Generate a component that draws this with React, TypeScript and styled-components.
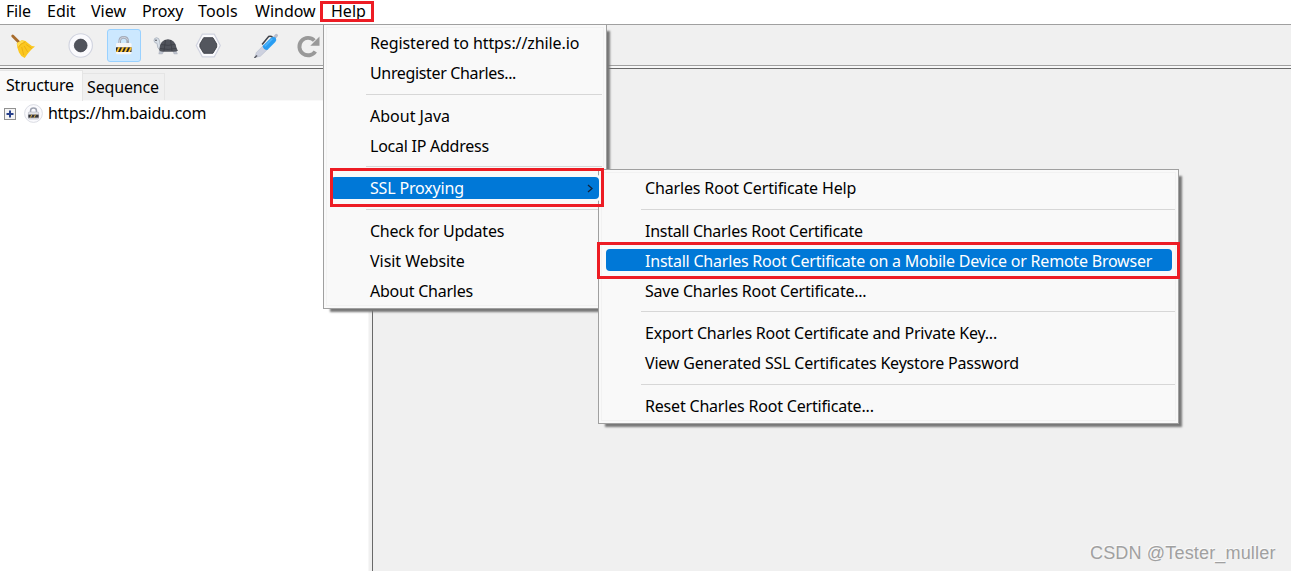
import React from 'react';
import styled, { createGlobalStyle } from 'styled-components';

const Global = createGlobalStyle`
  * { box-sizing: border-box; }
  body { margin: 0; background: #f0f0f0; font-family: "Noto Sans", "Open Sans", sans-serif; font-size: 16px; color: #000; }
  svg { display: block; }
`;

const Window = styled.div`
  position: relative;
  width: 1291px;
  height: 571px;
  overflow: hidden;
  display: flex;
  flex-direction: column;
  background: #f0f0f0;
`;

const MenuBar = styled.nav`
  height: 25px;
  flex: none;
  display: flex;
  background: #fff;
  border-bottom: 1px solid #a0a0a0;
`;

const MenuTitle = styled.div<{ $w: number; $ls?: number }>`
  width: ${p => p.$w}px;
  padding-left: 6px;
  line-height: 23px;
  white-space: nowrap;
  letter-spacing: ${p => p.$ls ?? 0}px;
`;

const ToolBar = styled.div`
  height: 44px;
  flex: none;
  display: flex;
  align-items: flex-start;
  padding: 4px 0 0 5px;
  border-bottom: 1px solid #696969;
  background: linear-gradient(#f0f0f0 40px, #a0a0a0 40px, #a0a0a0 41px, #f8f8f8 41px);
`;

const ToolButton = styled.button<{ $active?: boolean; $gap: number }>`
  width: 34px;
  height: 33px;
  margin: 0 0 0 ${p => p.$gap}px;
  padding: 0 0 0 3px;
  border-radius: 3px;
  border: 1px solid ${p => (p.$active ? '#99d1ff' : 'transparent')};
  background: ${p => (p.$active ? '#cce8ff' : 'transparent')};
`;

const Body = styled.div`
  flex: 1;
  display: flex;
`;

const Sidebar = styled.aside`
  width: 368px;
  display: flex;
  flex-direction: column;
  background: #fff;
`;

const Tabs = styled.div`
  height: 32px;
  display: flex;
  align-items: flex-end;
  background: #f0f0f0;
  border-bottom: 1px solid #f9f9f9;
`;

const Tab = styled.div<{ $active?: boolean; $ls: number }>`
  width: ${p => (p.$active ? 83 : 82)}px;
  height: ${p => (p.$active ? 31 : 27)}px;
  padding-left: ${p => (p.$active ? 6 : 4)}px;
  line-height: ${p => (p.$active ? 28 : 27)}px;
  margin-bottom: ${p => (p.$active ? -1 : 0)}px;
  letter-spacing: ${p => p.$ls}px;
  background: ${p => (p.$active ? '#f9f9f9' : '#f0f0f0')};
  border: 1px solid #e5e5e5;
  border-width: 1px 1px 0 0;
  white-space: nowrap;
`;

const TreeRow = styled.div`
  height: 25px;
  display: flex;
  align-items: center;
  gap: 8px;
  padding-left: 4px;
`;

const HostName = styled.span`
  margin: 0 0 2px -3px;
  line-height: 24px;
  letter-spacing: -0.27px;
`;

const Divider = styled.div`
  width: 5px;
  background: #f0f0f0;
  border-left: 1px solid #f7f7f7;
  border-right: 1px solid #696969;
`;

const Popup = styled.div<{ $x: number; $y: number; $w: number; $h: number }>`
  position: absolute;
  left: ${p => p.$x}px;
  top: ${p => p.$y}px;
  width: ${p => p.$w}px;
  height: ${p => p.$h}px;
  padding-top: 4px;
  background: #f9f9f9;
  border: 1px solid #a0a0a0;
  box-shadow: inset 0 0 0 2px #f9f9f9, inset 0 0 0 3px #f2f2f2, 5px 5px 2px -2px #777;
`;

const Item = styled.div<{ $ls?: number }>`
  height: 30px;
  padding-left: 46px;
  line-height: 29px;
  white-space: nowrap;
  letter-spacing: ${p => p.$ls ?? 0}px;
`;

const Separator = styled.div<{ $early?: boolean; $inset?: number }>`
  height: ${p => (p.$early ? 12 : 13)}px;
  padding-top: ${p => (p.$early ? 4 : 5)}px;
  margin: 0 ${p => p.$inset ?? 3}px 0 42px;
  &::before { content: ''; display: block; height: 1px; background: #d7d7d7; }
`;

const Selected = styled.div<{ $raised?: boolean; $ls: number }>`
  position: relative;
  z-index: ${p => (p.$raised ? 1 : 0)};
  height: 22px;
  margin: ${p => (p.$raised ? '3px 7px 5px' : '2px 6px 6px 7px')};
  padding: ${p => (p.$raised ? 0 : 2)}px 5px 0 39px;
  display: flex;
  align-items: center;
  justify-content: space-between;
  line-height: 22px;
  white-space: nowrap;
  color: #fff;
  background: #0078d7;
  border-radius: 4px;
  letter-spacing: ${p => p.$ls}px;
  box-shadow: ${p => (p.$raised ? '2px 0 0 2px #f9f9f9' : 'none')};
`;

const Mark = styled.div<{ $x: number; $y: number; $w: number; $h: number }>`
  position: absolute;
  z-index: 2;
  left: ${p => p.$x}px;
  top: ${p => p.$y}px;
  width: ${p => p.$w}px;
  height: ${p => p.$h}px;
  border: 3px solid #ed1c24;
`;

const Watermark = styled.div`
  position: absolute;
  left: 1090px;
  top: 542px;
  font: 18px/22px "Liberation Sans", sans-serif;
  letter-spacing: 0.17px;
  color: #a0a0a0;
  text-shadow: -1px -1px 0 #fafafa;
  white-space: nowrap;
`;

const Icon = ({ children }: { children: React.ReactNode }) => (
  <svg width="26" height="25" viewBox="0 0 26 25" fill="none">{children}</svg>
);

const Broom = () => (
  <Icon>
    <g transform="translate(.7 0)">
      <path d="M3 3L11 11" stroke="#a86c2c" strokeWidth="2.8" strokeLinecap="round" />
      <path d="M7 10.2L12 7.3Q15.5 6.8 18.5 10.2Q21.500 13.300 25.300 13.600Q20 17.500 15 25Q11 23.500 9.300 19.500Q7.600 16 7 10.200Z" fill="#fbc71f" />
      <path d="M7 10.200L12 7.300L14.500 9Q10.500 10 8.600 14Z" fill="#ffdc4f" />
      <path d="M8.500 14.500Q10.500 10.500 15.500 9M12 14L14 22M14.500 13L18 19M16.500 11.500L22 15.500" stroke="#e5a512" strokeWidth=".7" />
    </g>
  </Icon>
);

const Record = () => (
  <Icon>
    <circle cx="12.7" cy="12.5" r="11.7" fill="#fafafd" stroke="#d0d3df" strokeWidth="1.1" />
    <circle cx="12.7" cy="12.5" r="6.4" fill="#50535b" stroke="#3b3e47" strokeWidth=".7" />
  </Icon>
);

const Padlock = () => (
  <Icon>
    <path d="M8.700 11V8.300Q8.700 4.400 12.700 4.400Q16.700 4.400 16.700 8.300V11" stroke="#a2a8b6" strokeWidth="2.600" />
    <path d="M8.500 10V8.200Q8.700 4.300 12.700 4.300Q16 4.300 16.800 7.300" stroke="#d4d8e2" strokeWidth=".9" />
    <rect x="5" y="10" width="15.500" height="11.200" rx="1.300" fill="#f6f6f8" />
    <path d="M5 14.300H20.500V19H5Z" fill="#27272c" />
    <path d="M5 19L7.200 14.300H9.200L7 19ZM9 19L11.200 14.300H13.200L11 19ZM13 19L15.200 14.300H17.200L15 19ZM17 19L19.200 14.300H20.500V15.800L19 19Z" fill="#fbc02d" />
  </Icon>
);

const Turtle = () => (
  <Icon>
    <path d="M6.500 17L5.800 21H9.300L11 18ZM19.500 17L21 21H24.400L22.800 17Z" fill="#bfc4cf" stroke="#a2a7b4" strokeWidth=".4" />
    <path d="M1 7.800Q.8 5 3.500 4.700Q6.300 4.800 6.500 8L7.500 13.500L9 17.500Q5.600 17.200 4.800 14.500L4 10.300Q1.300 10.200 1 7.800Z" fill="#d8dfe7" stroke="#9fa7b5" strokeWidth=".7" />
    <circle cx="3" cy="7.200" r=".8" fill="#35373e" />
    <path d="M6.200 16.500Q7 6.500 15 6.200Q22.500 6.500 23.500 15.500L25 17.400Q23.500 19 19 18.700H10Q6.500 18.700 6.200 16.500Z" fill="#50535b" />
    <path d="M7 15.500Q15 17.500 24 15.200M8 11.500Q15 13.300 22.300 11.300M12.500 7L11 18M17.500 7L19 18" stroke="#3a3c43" strokeWidth=".7" />
  </Icon>
);

const Hexagon = () => (
  <Icon>
    <path d="M7.300 1.200H19.300L25.300 12.500L19.300 23.800H7.300L1.300 12.500Z" fill="#fafafd" stroke="#d0d3df" strokeWidth="1.200" />
    <path d="M8.700 4.700H17.900L21.700 11V14L17.900 20.300H8.700L4.900 14V11Z" fill="#53565e" stroke="#3c3f47" strokeWidth=".9" />
  </Icon>
);

const Pen = () => (
  <Icon>
    <g transform="translate(.8 0)">
      <path d="M9.300 11.500L15.800 3.600Q18 2.700 20 4.500" stroke="#40434b" strokeWidth="1.600" />
      <path d="M21.800 4.500L23.500 2.500" stroke="#b9bdca" strokeWidth="3.200" strokeLinecap="round" />
      <path d="M2 24.500L3.500 19.500L10.700 12.300L14.800 16.400L7.600 23.200Z" fill="#cdd1df" stroke="#b1b6c7" strokeWidth=".5" />
      <path d="M1.600 24.900L4.300 22.500" stroke="#565961" strokeWidth="1.400" />
      <path d="M9.800 13L18.300 4.800Q20.500 3.200 22.800 4.400Q24.200 6.600 22.500 9L14.500 17Q10.700 16.800 9.800 13Z" fill="#299df2" />
      <path d="M12 13.200L19.500 5.800" stroke="#50b5fb" strokeWidth="1.500" />
    </g>
  </Icon>
);

const Repeat = () => (
  <Icon>
    <path d="M20.300 18.500A8.700 8.700 0 1 1 19.300 7.500" stroke="#999" strokeWidth="3.900" />
    <path d="M24.500 3.500V12.800H15.300Z" fill="#999" />
  </Icon>
);

const Expander = () => (
  <svg width="12" height="12" viewBox="0 0 12 12" fill="none">
    <rect x=".5" y=".5" width="11" height="11" fill="#f5f5f5" stroke="#919191" />
    <path d="M2.500 6H9.500M6 2.500V9.500" stroke="#27408b" strokeWidth="2" />
  </svg>
);

const HostLock = () => (
  <svg width="19" height="19" viewBox="0 0 26 26" fill="none">
    <circle cx="13" cy="13" r="12.200" fill="#fafafd" stroke="#d8dae2" strokeWidth="1.300" />
    <path d="M9 12V9Q9 5.500 13 5.500Q17 5.500 17 9V12" stroke="#9da2af" strokeWidth="2.100" />
    <rect x="6" y="11" width="14" height="9.500" rx="1" fill="#e2e3e8" stroke="#b4b7c0" strokeWidth=".9" />
    <path d="M6 14.500H20V18.700H6Z" fill="#34343a" />
    <path d="M8 18.700L10 14.500H11.500L9.500 18.700ZM13 18.700L15 14.500H16.500L14.500 18.700Z" fill="#d3ab4b" />
  </svg>
);

const Chevron = () => (
  <svg width="7" height="9" viewBox="0 0 7 9" fill="none">
    <path d="M1 1L5 4.500L1 8" stroke="#10233a" strokeWidth="1.300" />
  </svg>
);

export default function App() {
  return (
    <Window>
      <Global />
      <MenuBar>
        <MenuTitle $w={41} $ls={-0.2}>File</MenuTitle>
        <MenuTitle $w={44}>Edit</MenuTitle>
        <MenuTitle $w={51}>View</MenuTitle>
        <MenuTitle $w={56} $ls={-0.15}>Proxy</MenuTitle>
        <MenuTitle $w={57} $ls={0.2}>Tools</MenuTitle>
        <MenuTitle $w={76}>Window</MenuTitle>
        <MenuTitle $w={60}>Help</MenuTitle>
      </MenuBar>
      <ToolBar>
        <ToolButton $gap={0}><Broom /></ToolButton>
        <ToolButton $gap={25}><Record /></ToolButton>
        <ToolButton $gap={9} $active><Padlock /></ToolButton>
        <ToolButton $gap={8}><Turtle /></ToolButton>
        <ToolButton $gap={8}><Hexagon /></ToolButton>
        <ToolButton $gap={23}><Pen /></ToolButton>
        <ToolButton $gap={9}><Repeat /></ToolButton>
      </ToolBar>
      <Body>
        <Sidebar>
          <Tabs>
            <Tab $active $ls={-0.2}>Structure</Tab>
            <Tab $ls={-0.15}>Sequence</Tab>
          </Tabs>
          <TreeRow>
            <Expander />
            <HostLock />
            <HostName>https://hm.baidu.com</HostName>
          </TreeRow>
        </Sidebar>
        <Divider />
      </Body>
      <Popup $x={323} $y={24} $w={284} $h={285}>
        <Item $ls={-0.1}>Registered to https://zhile.io</Item>
        <Item $ls={-0.35}>Unregister Charles...</Item>
        <Separator $inset={4} />
        <Item>About Java</Item>
        <Item $ls={-0.25}>Local IP Address</Item>
        <Separator $early $inset={4} />
        <Selected $raised $ls={-0.17}>SSL Proxying<Chevron /></Selected>
        <Separator $inset={4} />
        <Item $ls={-0.24}>Check for Updates</Item>
        <Item $ls={-0.05}>Visit Website</Item>
        <Item $ls={-0.23}>About Charles</Item>
      </Popup>
      <Popup $x={598} $y={169} $w={581} $h={255}>
        <Item $ls={-0.15}>Charles Root Certificate Help</Item>
        <Separator />
        <Item $ls={-0.28}>Install Charles Root Certificate</Item>
        <Selected $ls={-0.21}>Install Charles Root Certificate on a Mobile Device or Remote Browser</Selected>
        <Item $ls={-0.22}>Save Charles Root Certificate...</Item>
        <Separator $early />
        <Item $ls={-0.21}>Export Charles Root Certificate and Private Key...</Item>
        <Item $ls={-0.19}>View Generated SSL Certificates Keystore Password</Item>
        <Separator />
        <Item $ls={-0.19}>Reset Charles Root Certificate...</Item>
      </Popup>
      <Mark $x={320} $y={1} $w={54} $h={21} />
      <Mark $x={330} $y={168} $w={274} $h={39} />
      <Mark $x={597} $y={242} $w={583} $h={37} />
      <Watermark>CSDN @Tester_muller</Watermark>
    </Window>
  );
}
